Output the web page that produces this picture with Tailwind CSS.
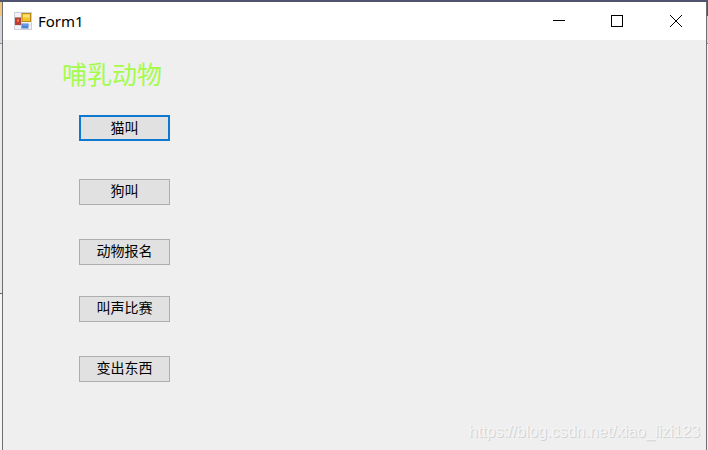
<!DOCTYPE html>
<html lang="zh-CN">
<head>
    <meta charset="UTF-8">
    <meta name="viewport" content="width=device-width, initial-scale=1.0">
    <title>Form1</title>
    <script src="https://cdn.jsdelivr.net/npm/@tailwindcss/browser@4"></script>
</head>
<body class="flex h-screen flex-col overflow-hidden bg-[#efefef] font-['Noto_Sans','Noto_Sans_CJK_SC',sans-serif]">
    <!-- Edge of the window behind -->
    <div class="h-0.5 shrink-0 bg-[#50536e]"></div>

    <div class="flex min-h-0 flex-1">
        <div class="flex w-0.5 flex-col">
            <div class="h-3.5 bg-[#f0c67c]"></div>
            <div class="h-7 border-b border-[#8d8d99] bg-[#d5d5e2]"></div>
            <div class="h-[250px] border-b border-[#666666] bg-[#e9e9ea]"></div>
            <div class="flex-1 bg-[#f5f5f5]"></div>
        </div>

        <!-- Form window -->
        <div class="relative flex flex-1 flex-col border-x border-[#6e6e6e]">
            <header class="flex h-[38px] items-center bg-white pl-[11px]">
                <svg class="size-[18px]" viewBox="0 0 18 18" aria-hidden="true">
                    <rect x="0.5" y="0.5" width="17" height="17" fill="#f0f2f5" stroke="#cbd0d8"/>
                    <path d="M7.5 1v16M1 5.5h7M1 13h16" stroke="#d2d6dd"/>
                    <rect x="1.5" y="6" width="5" height="6.5" fill="#c73a2c" stroke="#a8443c"/>
                    <rect x="3" y="7.5" width="2" height="2" fill="#ef8a78"/>
                    <rect x="8" y="1.5" width="8.5" height="8" fill="#f4c430" stroke="#b98b18"/>
                    <path d="M9 2.5h6.5v3H9z" fill="#fbdf72"/>
                    <rect x="8" y="12" width="6" height="4" fill="#4a83dd" stroke="#5a86cc"/>
                    <path d="M8.5 12.5h5v1h-5z" fill="#86b0f2"/>
                </svg>
                <h1 class="ml-1.5 flex-1 text-[15px] leading-5 text-black">Form1</h1>
                <button class="flex h-full w-[58px] items-center justify-center" aria-label="Minimize">
                    <svg class="size-3" viewBox="0 0 12 12" stroke="#000" fill="none"><path d="M0 5.5h12"/></svg>
                </button>
                <button class="flex h-full w-[58px] items-center justify-center" aria-label="Maximize">
                    <svg class="size-3" viewBox="0 0 12 12" stroke="#000" fill="none"><rect x="0.5" y="0.5" width="11" height="11"/></svg>
                </button>
                <button class="flex h-full w-[60px] items-center justify-center" aria-label="Close">
                    <svg class="size-3" viewBox="0 0 12 12" stroke="#000" fill="none"><path d="M0 0l12 12M12 0L0 12"/></svg>
                </button>
            </header>

            <main class="flex flex-1 flex-col items-start pl-[59px] pt-[18px]">
                <h2 class="text-[25px] leading-8 text-[#a4fb4c]">哺乳动物</h2>
                <div class="ml-[17px] mt-[25px] flex flex-col text-[14px] leading-5 text-black">
                    <button class="mb-[38px] h-[26px] w-[91px] border-2 border-[#0f78d0] bg-[#e1e1e1]">猫叫</button>
                    <button class="mb-[34px] h-[26px] w-[91px] border border-[#adadad] bg-[#e1e1e1] pb-0.5">狗叫</button>
                    <button class="mb-[31px] h-[26px] w-[91px] border border-[#adadad] bg-[#e1e1e1] pb-0.5">动物报名</button>
                    <button class="mb-[34px] h-[26px] w-[91px] border border-[#adadad] bg-[#e1e1e1] pb-0.5">叫声比赛</button>
                    <button class="h-[26px] w-[91px] border border-[#adadad] bg-[#e1e1e1] pb-0.5">变出东西</button>
                </div>
            </main>

            <p class="absolute bottom-2 right-1.5 font-['Liberation_Sans',sans-serif] text-[16px] leading-5 text-[#f5f5f5] [text-shadow:1px_1px_0_#d2d2d2]">https://blog.csdn.net/xiao_lizi123</p>
        </div>

        <div class="flex w-px flex-col">
            <div class="h-3.5 bg-[#50536e]"></div>
            <div class="h-7 border-b border-[#7d88a5] bg-[#d5d5e2]"></div>
            <div class="flex-1 bg-[#efefef]"></div>
        </div>
    </div>
</body>
</html>
